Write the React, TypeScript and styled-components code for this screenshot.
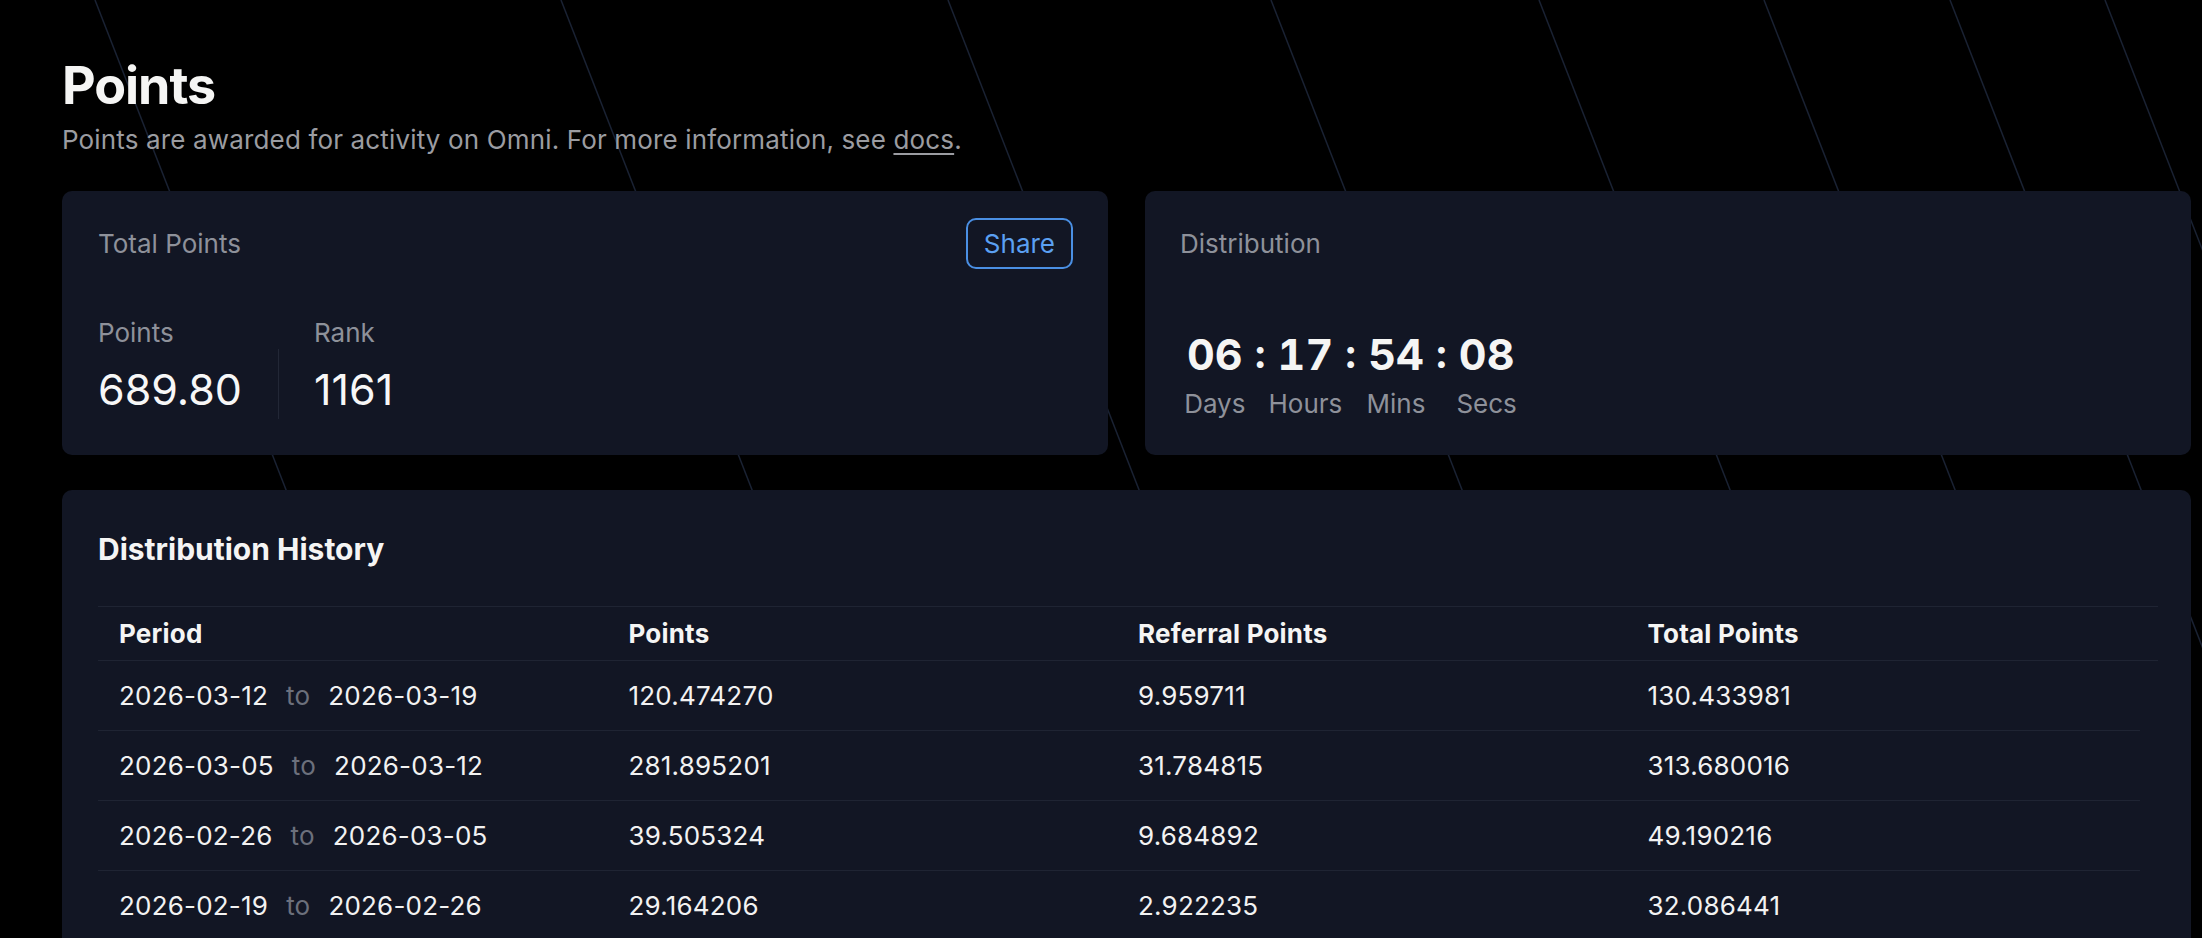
import styled, { createGlobalStyle } from "styled-components";

const GlobalStyle = createGlobalStyle`
  html, body {
    margin: 0;
    padding: 0;
    background: #000;
  }
  body {
    font-family: Inter, "Noto Sans", sans-serif;
    color: #f4f4f5;
    -webkit-font-smoothing: antialiased;
  }
  * {
    box-sizing: border-box;
  }
`;

// slanted backdrop strokes, x where each one leaves the top edge
const LINE_STARTS = [95, 561, 948, 1271, 1539, 1764, 1950, 2105];
const SLANT = 0.39;
const BACKDROP_HEIGHT = 1400;

const Page = styled.main`
  position: relative;
  min-height: 100vh;
  overflow: hidden;
  padding: 56px 11px 0 62px;
`;

const Backdrop = styled.svg`
  position: absolute;
  left: 0;
  top: 0;
  width: 100%;
  height: ${BACKDROP_HEIGHT}px;
  z-index: 0;
  pointer-events: none;
`;

const Content = styled.div`
  position: relative;
  z-index: 1;
`;

const Title = styled.h1`
  margin: 0;
  font-size: 52px;
  line-height: 60px;
  font-weight: 700;
  letter-spacing: -0.02em;
  color: #f5f5f4;
`;

const Subtitle = styled.p`
  margin: 6px 0 0;
  font-size: 26px;
  line-height: 36px;
  letter-spacing: 0.15px;
  color: #9b9ca1;

  a {
    color: inherit;
    text-decoration: underline;
    text-underline-offset: 4px;
  }
`;

const TopRow = styled.section`
  display: grid;
  grid-template-columns: 1fr 1fr;
  gap: 37px;
  margin-top: 33px;
`;

const Card = styled.div<{ $pad?: string }>`
  background: #121624;
  border-radius: 10px;
  padding: ${(p) => p.$pad ?? "27px 35px 0 36px"};
`;

const CardHeader = styled.div`
  display: flex;
  align-items: center;
  justify-content: space-between;
  min-height: 51px;
`;

const Label = styled.span`
  font-size: 26px;
  line-height: 36px;
  color: #8e919a;
`;

const ShareButton = styled.button`
  height: 51px;
  padding: 0 16px;
  border: 2px solid #4a8fe3;
  border-radius: 10px;
  background: transparent;
  color: #5ba0f2;
  font-family: inherit;
  font-size: 26px;
  cursor: pointer;
`;

const Stats = styled.div`
  display: flex;
  margin-top: 46px;
  padding-bottom: 38px;
`;

const Stat = styled.div<{ $first?: boolean }>`
  display: flex;
  flex-direction: column;
  padding: ${(p) => (p.$first ? "0 36px 0 0" : "0 0 0 35px")};
`;

const StatDivider = styled.div`
  align-self: flex-end;
  width: 1px;
  height: 70px;
  margin-bottom: -2px;
  background: #222736;
`;

const StatValue = styled.span`
  margin-top: 10px;
  font-size: 43px;
  line-height: 56px;
  color: #f7f7f7;
`;

const Countdown = styled.div`
  display: flex;
  align-items: flex-start;
  margin: 59px 0 0 7px;
  padding-bottom: 33px;
`;

// a unit is as wide as its number; the caption is centred under it and may spill over
const Unit = styled.div`
  display: flex;
  flex-direction: column;
  align-items: center;
`;

const UnitNumber = styled.span`
  font-size: 43px;
  line-height: 52px;
  font-weight: 700;
  font-feature-settings: "tnum";
  color: #f5f5f4;
`;

const UnitLabel = styled(Label)`
  display: flex;
  justify-content: center;
  width: 0;
  margin-top: 6px;
  white-space: nowrap;
`;

const Colon = styled.span`
  width: 35px;
  text-align: center;
  font-size: 40px;
  line-height: 52px;
  font-weight: 700;
  color: #f5f5f4;
`;

const HistoryCard = styled(Card)`
  margin-top: 35px;
  padding: 39px 33px 60px 36px;
`;

const HistoryTitle = styled.h2`
  margin: 0;
  font-size: 30px;
  line-height: 40px;
  font-weight: 700;
  color: #f5f5f4;
`;

const Table = styled.div`
  margin-top: 37px;
`;

const HeadRow = styled.div`
  display: grid;
  grid-template-columns: repeat(4, 1fr);
  padding-right: 22px;
  border-top: 1px solid #1f2433;
  border-bottom: 1px solid #1f2433;
`;

const HeadCell = styled.div`
  padding: 9px 21px 8px;
  font-size: 26px;
  line-height: 36px;
  font-weight: 700;
  letter-spacing: 0.2px;
  color: #f5f5f4;
`;

const BodyRow = styled.div`
  display: grid;
  grid-template-columns: repeat(4, 1fr);
  margin-right: 18px;
  padding-right: 4px;
  border-bottom: 1px solid #1f2433;
`;

const Cell = styled.div`
  display: flex;
  gap: 18px;
  padding: 17px 21px 16px;
  font-size: 26px;
  line-height: 36px;
  letter-spacing: 0.2px;
  color: #f2f2f2;
`;

const To = styled.span`
  color: #6c707c;
`;

const countdown = [
  { value: "06", label: "Days" },
  { value: "17", label: "Hours" },
  { value: "54", label: "Mins" },
  { value: "08", label: "Secs" },
];

const history = [
  { from: "2026-03-12", to: "2026-03-19", points: "120.474270", referral: "9.959711", total: "130.433981" },
  { from: "2026-03-05", to: "2026-03-12", points: "281.895201", referral: "31.784815", total: "313.680016" },
  { from: "2026-02-26", to: "2026-03-05", points: "39.505324", referral: "9.684892", total: "49.190216" },
  { from: "2026-02-19", to: "2026-02-26", points: "29.164206", referral: "2.922235", total: "32.086441" },
];

export default function App() {
  return (
    <>
      <GlobalStyle />
      <Page>
        <Backdrop>
          {LINE_STARTS.map((x) => (
            <line
              key={x}
              x1={x}
              y1={0}
              x2={x + SLANT * BACKDROP_HEIGHT}
              y2={BACKDROP_HEIGHT}
              stroke="#1a2233"
              strokeWidth={1.5}
            />
          ))}
        </Backdrop>

        <Content>
          <Title>Points</Title>
          <Subtitle>
            Points are awarded for activity on Omni. For more information, see <a href="#">docs</a>.
          </Subtitle>

          <TopRow>
            <Card>
              <CardHeader>
                <Label>Total Points</Label>
                <ShareButton>Share</ShareButton>
              </CardHeader>
              <Stats>
                <Stat $first>
                  <Label>Points</Label>
                  <StatValue>689.80</StatValue>
                </Stat>
                <StatDivider />
                <Stat>
                  <Label>Rank</Label>
                  <StatValue>1161</StatValue>
                </Stat>
              </Stats>
            </Card>

            <Card $pad="27px 35px 0 35px">
              <CardHeader>
                <Label>Distribution</Label>
              </CardHeader>
              <Countdown>
                {countdown.flatMap((u, i) => {
                  const unit = (
                    <Unit key={u.label}>
                      <UnitNumber>{u.value}</UnitNumber>
                      <UnitLabel>{u.label}</UnitLabel>
                    </Unit>
                  );
                  return i === 0 ? [unit] : [<Colon key={`sep-${u.label}`}>:</Colon>, unit];
                })}
              </Countdown>
            </Card>
          </TopRow>

          <HistoryCard>
            <HistoryTitle>Distribution History</HistoryTitle>
            <Table>
              <HeadRow>
                <HeadCell>Period</HeadCell>
                <HeadCell>Points</HeadCell>
                <HeadCell>Referral Points</HeadCell>
                <HeadCell>Total Points</HeadCell>
              </HeadRow>
              {history.map((row) => (
                <BodyRow key={row.from}>
                  <Cell>
                    <span>{row.from}</span>
                    <To>to</To>
                    <span>{row.to}</span>
                  </Cell>
                  <Cell>{row.points}</Cell>
                  <Cell>{row.referral}</Cell>
                  <Cell>{row.total}</Cell>
                </BodyRow>
              ))}
            </Table>
          </HistoryCard>
        </Content>
      </Page>
    </>
  );
}
